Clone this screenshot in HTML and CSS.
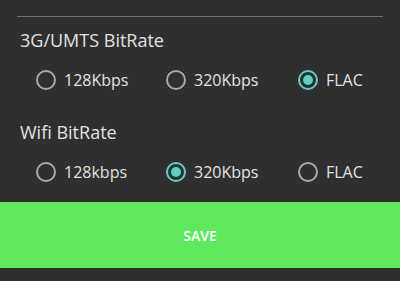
FILE: index.html
```html
<!DOCTYPE html>
<html>
<head>
<meta charset="utf-8">
<link rel="stylesheet" href="styles.css">
</head>
<body>
<div class="screen">
  <div class="divider"></div>
  <div class="group">
    <div class="label">3G/UMTS BitRate</div>
    <div class="options">
      <div class="opt"><span class="radio"></span><span>128Kbps</span></div>
      <div class="opt"><span class="radio"></span><span>320Kbps</span></div>
      <div class="opt"><span class="radio on"></span><span>FLAC</span></div>
    </div>
  </div>
  <div class="group">
    <div class="label">Wifi BitRate</div>
    <div class="options">
      <div class="opt"><span class="radio"></span><span>128kbps</span></div>
      <div class="opt"><span class="radio on"></span><span>320Kbps</span></div>
      <div class="opt"><span class="radio"></span><span>FLAC</span></div>
    </div>
  </div>
  <div class="save">SAVE</div>
</div>
</body>
</html>
```

FILE: styles.css
```css
html, body {
  margin: 0;
  padding: 0;
  background: #2f2f2f;
}
.screen {
  width: 400px;
  height: 281px;
  overflow: hidden;
  font-family: "Open Sans", "Noto Sans", sans-serif;
  color: #e2e2e2;
  padding-top: 16px;
  box-sizing: border-box;
}
.divider {
  height: 1px;
  margin: 0 17px;
  background: #707070;
}
.group {
  padding-top: 11px;
}
.group + .group {
  padding-top: 20px;
}
.label {
  padding-left: 20px;
  font-size: 18px;
  line-height: 24px;
}
.options {
  display: grid;
  grid-template-columns: 130px 132px 100px;
  padding-left: 36px;
  margin-top: 8px;
  height: 40px;
  align-items: center;
}
.opt {
  display: flex;
  align-items: center;
  gap: 8px;
  font-size: 16px;
}
.radio {
  width: 20px;
  height: 20px;
  box-sizing: border-box;
  border: 2px solid #a8a8a8;
  border-radius: 50%;
  display: flex;
  align-items: center;
  justify-content: center;
  flex: none;
}
.radio.on {
  border-color: #5ed0c3;
}
.radio.on::after {
  content: "";
  width: 10px;
  height: 10px;
  border-radius: 50%;
  background: #5ed0c3;
}
.save {
  margin-top: 10px;
  height: 66px;
  background: #5ee95e;
  color: #ffffff;
  font-size: 14px;
  font-weight: 600;
  display: flex;
  align-items: center;
  justify-content: center;
}
```
